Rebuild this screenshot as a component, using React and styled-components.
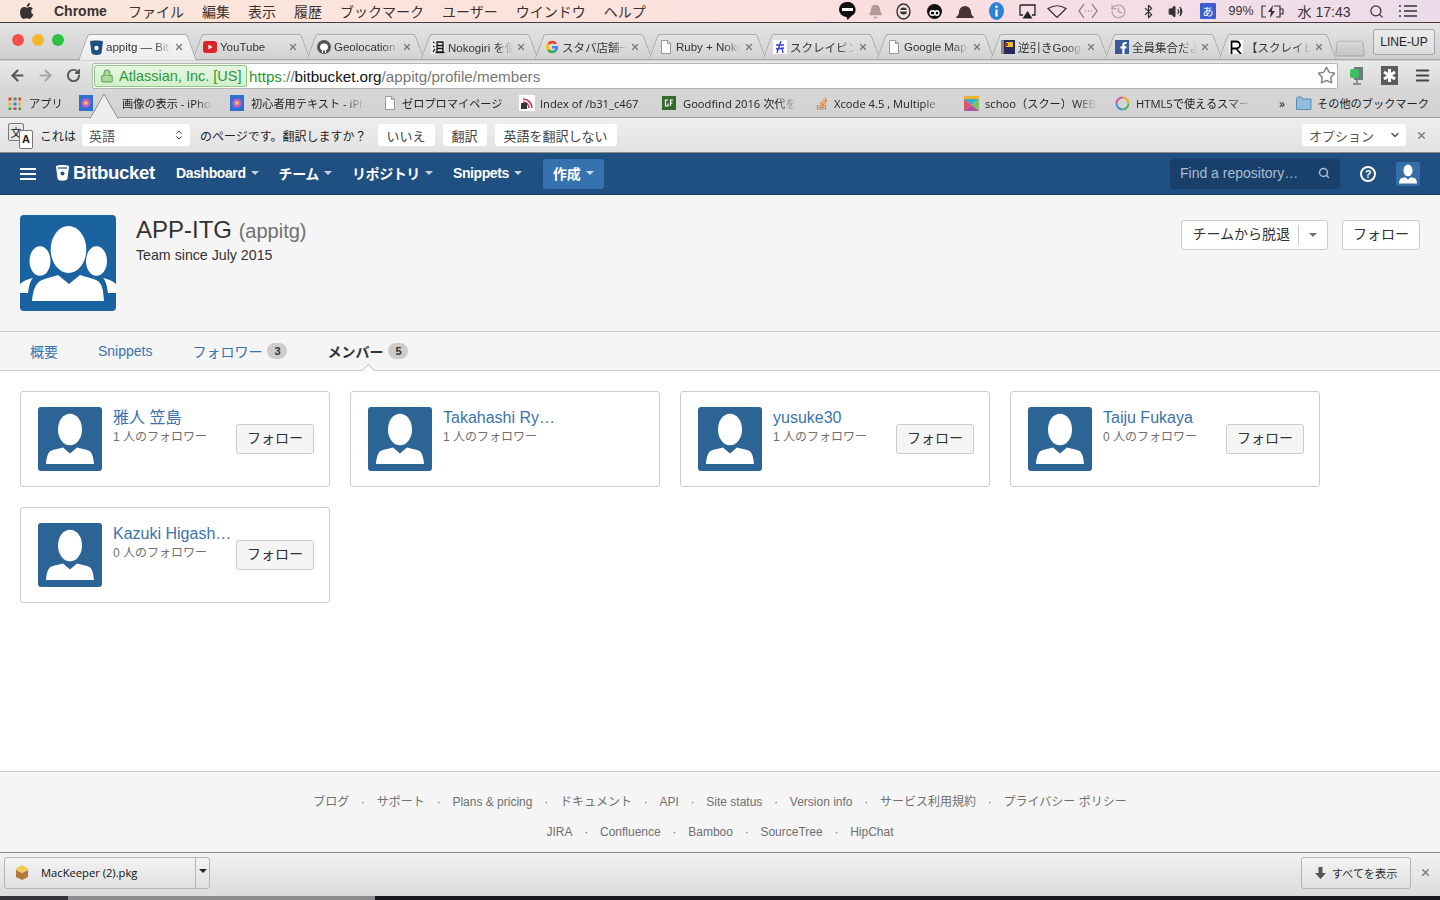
import styled, { createGlobalStyle } from 'styled-components';
import {
  ArrowLeft,
  ArrowRight,
  RotateCw,
  Star,
  Bell,
  Bluetooth,
  Volume2,
  Search,
  History,
  Lock,
  Menu,
  ChevronsUpDown,
  ChevronDown,
  X,
} from 'lucide-react';

const GlobalStyle = createGlobalStyle`
  html, body {
    margin: 0;
    padding: 0;
    background: #fff;
  }
  body {
    font-family: "Liberation Sans", "Noto Sans CJK JP", sans-serif;
    font-size: 14px;
    color: #333;
  }
  * {
    box-sizing: border-box;
  }
`;

const Screen = styled.div`
  width: 1440px;
  height: 900px;
  display: flex;
  flex-direction: column;
  overflow: hidden;
  position: relative;
`;

/* mac menu bar */
const MenuBar = styled.div`
  height: 23px;
  flex: none;
  display: flex;
  align-items: center;
  justify-content: space-between;
  padding: 0 20px;
  background: linear-gradient(90deg, #f9e6da 0%, #fce3dc 40%, #fbdfe0 60%, #ecdcea 100%);
  border-bottom: 1px solid #4a3a3a;
`;

const MenuLeft = styled.div`
  display: flex;
  align-items: center;
  gap: 18px;
  padding-bottom: 1px;
  color: #3a3232;
`;

const AppleIcon = styled.svg`
  width: 14px;
  height: 16px;
  margin-right: 2px;
`;

const AppName = styled.span`
  font-weight: 700;
  font-size: 14px;
  margin-right: 3px;
`;

const MenuItem = styled.span`
  font-size: 14px;
`;

const MenuRight = styled.div`
  display: flex;
  align-items: center;
  color: #3a3232;
  font-size: 13px;
  height: 22px;
`;

const StatusSlot = styled.div`
  width: ${({ $w }) => $w}px;
  display: flex;
  justify-content: center;
  align-items: center;
  white-space: nowrap;
  font-size: ${({ $size }) => $size || 13}px;
`;

const ImeBadge = styled.span`
  width: 16px;
  height: 16px;
  background: #3c5fd0;
  color: #fff;
  font-size: 11px;
  display: flex;
  align-items: center;
  justify-content: center;
  border-radius: 1px;
`;

/* chrome tab strip */
const Chrome = styled.div`
  flex: none;
  background: linear-gradient(#e4e4e4, #cfcfcf 38px, #e9e9e9 38px, #d6d6d6 68px, #d2d2d2 95px);
`;

const TabStrip = styled.div`
  height: 37px;
  display: flex;
  align-items: flex-end;
  padding-left: 12px;
  position: relative;
  border-bottom: 1px solid #a8a8a8;
`;

const TrafficLights = styled.div`
  display: flex;
  gap: 8px;
  width: 62px;
  height: 26px;
  padding-top: 1px;
  flex: none;
`;

const Light = styled.span`
  width: 12px;
  height: 12px;
  border-radius: 50%;
  background: ${({ $color }) => $color};
`;

const Tab = styled.div`
  width: 114px;
  height: 26px;
  flex: none;
  display: flex;
  align-items: center;
  padding: 0 4px 0 ${({ $active }) => ($active ? 16 : 15)}px;
  position: relative;
  font-size: 11.5px;
  color: #333;
  z-index: ${({ $active }) => ($active ? 2 : 1)};
  margin-bottom: -1px;

  &::before,
  &::after {
    content: '';
    position: absolute;
    top: 0;
    bottom: 0;
    width: 55%;
    z-index: -1;
    border-top: 1px solid #a9a9a9;
    background: ${({ $active }) =>
      $active ? 'linear-gradient(#f6f6f6, #ececec)' : 'linear-gradient(#e3e3e3, #d2d2d2)'};
    ${({ $active }) => ($active ? '' : 'border-bottom: 1px solid #a8a8a8;')}
  }
  &::before {
    left: 9px;
    border-left: 1px solid #a0a0a0;
    border-radius: 3px 0 0 0;
    transform: skewX(-20deg);
  }
  &::after {
    right: -4px;
    border-right: 1px solid #a0a0a0;
    border-radius: 0 3px 0 0;
    transform: skewX(20deg);
  }
`;

const TabTitle = styled.span`
  flex: 1;
  margin-left: 3px;
  white-space: nowrap;
  overflow: hidden;
  -webkit-mask-image: linear-gradient(90deg, #000 75%, transparent);
  mask-image: linear-gradient(90deg, #000 75%, transparent);
`;

const TabClose = styled(X)`
  width: 10px;
  height: 10px;
  flex: none;
  color: #777;
  margin-left: 3px;
  stroke-width: 3;
`;

const NewTab = styled.div`
  width: 28px;
  height: 16px;
  margin: 0 0 3px 8px;
  background: linear-gradient(#d8d8d8, #c6c6c6);
  border: 1px solid #a8a8a8;
  border-radius: 3px 3px 2px 2px;
  transform: perspective(20px) rotateX(10deg);
  flex: none;
`;

const ProfileButton = styled.div`
  position: absolute;
  right: 5px;
  top: 6px;
  width: 62px;
  height: 26px;
  border: 1px solid #a5a5a5;
  border-radius: 3px;
  background: linear-gradient(#ececec, #dcdcdc);
  font-size: 12px;
  color: #222;
  display: flex;
  align-items: center;
  justify-content: center;
`;

const Toolbar = styled.div`
  height: 31px;
  display: flex;
  align-items: center;
  padding: 0 0 0 3px;
`;

const NavIcon = styled.div`
  width: 28px;
  display: flex;
  justify-content: center;
  color: ${({ $dim }) => ($dim ? '#a8a8a8' : '#555')};
`;

const Omnibox = styled.div`
  width: 1246px;
  height: 26px;
  margin-left: 5px;
  background: #fff;
  border: 1px solid #b5b5b5;
  border-radius: 2px;
  display: flex;
  align-items: center;
  padding: 0 1px 0 1px;
  font-size: 14.5px;
`;

const EvBadge = styled.div`
  width: 153px;
  height: 22px;
  flex: none;
  display: flex;
  align-items: center;
  gap: 5px;
  padding: 1px 0 0 5px;
  background: linear-gradient(#e7f6e2, #d3efcb);
  border: 1px solid #8ccb82;
  border-radius: 2px;
  color: #2b9a3c;
  white-space: nowrap;
`;

const Url = styled.span`
  margin-left: 2px;
  padding-top: 1px;
  color: #777;
  flex: 1;
  font-size: 15.2px;
  white-space: nowrap;
  b {
    font-weight: 400;
    color: #1d9a2e;
  }
  em {
    font-style: normal;
    color: #111;
  }
`;

const ToolIcons = styled.div`
  flex: 1;
  display: flex;
  align-items: center;
  justify-content: flex-end;
  gap: 16px;
  padding-right: 9px;
  color: #555;
`;

const Bookmarks = styled.div`
  height: 27px;
  display: flex;
  align-items: center;
  padding: 0 0 2px 8px;
  font-family: "Open Sans", "Noto Sans CJK JP", sans-serif;
  font-size: 11.2px;
  color: #222;
  border-bottom: 1px solid #9e9e9e;
  position: relative;
`;

const Bookmark = styled.div`
  width: ${({ $w }) => $w}px;
  flex: none;
  display: flex;
  align-items: center;
  white-space: nowrap;
  gap: ${({ $gap }) => $gap ?? 5}px;
  overflow: hidden;
  padding-right: ${({ $pad }) => $pad ?? 18}px;
`;

const BookmarkText = styled.span`
  flex: 1;
  overflow: hidden;
  -webkit-mask-image: linear-gradient(90deg, #000 82%, transparent);
  mask-image: linear-gradient(90deg, #000 82%, transparent);
`;

const Overflow = styled.span`
  width: 17px;
  flex: none;
  font-size: 12px;
`;

/* translate bar */
const TranslateBar = styled.div`
  height: 35px;
  position: relative;
  display: flex;
  align-items: center;
  padding: 0 13px 0 8px;
  font-size: 12px;
  color: #222;
  background: linear-gradient(#eeeeee, #e2e2e2);
  border-bottom: 1px solid #8d8d8d;
`;

const Pointer = styled.svg`
  position: absolute;
  left: 90px;
  top: -25px;
  width: 30px;
  height: 26px;
`;

const TranslateIcon = styled.div`
  width: 27px;
  height: 27px;
  flex: none;
  position: relative;
  margin: 2px 5px 0 0;
`;

const Glyph = styled.span`
  position: absolute;
  left: ${({ $back }) => ($back ? 0 : 11)}px;
  top: ${({ $back }) => ($back ? 0 : 7)}px;
  width: ${({ $back }) => ($back ? 16 : 14)}px;
  height: ${({ $back }) => ($back ? 18 : 19)}px;
  border: 1px solid #777;
  border-radius: 2px;
  background: ${({ $back }) => ($back ? '#e8e8e8' : '#fff')};
  font-size: 11px;
  font-weight: ${({ $back }) => ($back ? 400 : 700)};
  display: flex;
  align-items: center;
  justify-content: center;
`;

const FakeSelect = styled.div`
  width: ${({ $w }) => $w}px;
  height: 22px;
  flex: none;
  background: #fff;
  border-radius: 3px;
  display: flex;
  align-items: center;
  justify-content: space-between;
  padding: 0 5px 0 7px;
  color: #555;
  font-size: 13px;
  margin: ${({ $m }) => $m || 0};
`;

const TranslateQuestion = styled.span`
  margin-right: 11px;
`;

const InfoButton = styled.div`
  height: 22px;
  flex: none;
  padding: 0 9px;
  margin-right: 8px;
  background: #fff;
  border-radius: 3px;
  display: flex;
  align-items: center;
  color: #444;
  font-size: 13px;
`;

const Spacer = styled.div`
  flex: 1;
`;

/* bitbucket header */
const Header = styled.header`
  height: 42px;
  flex: none;
  background: #205081;
  border-bottom: 1px solid #1a3f66;
  display: flex;
  align-items: center;
  padding: 0 20px;
  color: #fff;
`;

const Burger = styled.div`
  width: 16px;
  height: 12px;
  border-top: 2px solid #fff;
  border-bottom: 2px solid #fff;
  position: relative;
  margin-right: 20px;

  &::after {
    content: '';
    position: absolute;
    left: 0;
    right: 0;
    top: 3px;
    height: 2px;
    background: #fff;
  }
`;

const Logo = styled.div`
  display: flex;
  align-items: center;
  gap: 4px;
  margin-right: 21px;
  padding-bottom: 1px;
  font-weight: 700;
  font-size: 18.6px;
  letter-spacing: -0.3px;
`;

const HeadLink = styled.div`
  display: flex;
  align-items: center;
  gap: 5px;
  margin-right: 20px;
  padding-bottom: 2px;
  font-size: 14px;
  font-weight: 700;
  letter-spacing: -0.4px;
`;

const Caret = styled.span`
  width: 0;
  height: 0;
  border-left: 4px solid transparent;
  border-right: 4px solid transparent;
  border-top: 4px solid ${({ $color }) => $color || 'rgba(255,255,255,0.75)'};
`;

const CreateButton = styled.div`
  width: 61px;
  height: 30px;
  border-radius: 3px;
  background: #3572b0;
  display: flex;
  align-items: center;
  justify-content: center;
  gap: 5px;
  padding-bottom: 2px;
  font-weight: 700;
  margin-left: 1px;
`;

const SearchBox = styled.div`
  width: 170px;
  height: 30px;
  border-radius: 3px;
  background: #19406b;
  display: flex;
  align-items: center;
  justify-content: space-between;
  padding: 0 10px 1px;
  color: #a9bdd3;
`;

const UserBadge = styled.div`
  width: 24px;
  height: 24px;
  border-radius: 3px;
  background: #356ea6;
  overflow: hidden;
`;

const HelpIcon = styled.div`
  width: 16px;
  height: 16px;
  border: 2px solid #fff;
  border-radius: 50%;
  font-size: 11px;
  font-weight: 700;
  display: flex;
  align-items: center;
  justify-content: center;
  margin: 0 20px;
`;

/* profile */
const Profile = styled.section`
  height: 137px;
  flex: none;
  background: #f5f5f5;
  border-bottom: 1px solid #ccc;
  padding: 20px;
  display: flex;
`;

const ProfileInfo = styled.div`
  margin-left: 20px;
  flex: 1;
`;

const Title = styled.h1`
  margin: 0;
  font-weight: 400;
  font-size: 24px;
  line-height: 30px;
  color: #333;

  small {
    font-size: 20px;
    color: #707070;
  }
`;

const Since = styled.div`
  font-size: 14.2px;
  line-height: 20px;
  margin-top: -1px;
  color: #333;
`;

const ProfileActions = styled.div`
  display: flex;
  gap: 14px;
  margin-top: 5px;
  align-items: flex-start;
`;

const Button = styled.div`
  height: 30px;
  background: ${({ $grey }) => ($grey ? '#f5f5f5' : '#fff')};
  border: 1px solid #ccc;
  border-radius: 3px;
  padding: 0 10px 4px;
  display: flex;
  align-items: center;
  flex: none;
  color: #333;
`;

const SplitDivider = styled.span`
  width: 1px;
  height: 20px;
  background: #ccc;
  margin: 4px 10px 0 8px;
`;

const SplitCaret = styled(Caret)`
  margin-top: 4px;
`;

const TabsRow = styled.nav`
  height: 39px;
  flex: none;
  background: #f5f5f5;
  border-bottom: 1px solid #ccc;
  display: flex;
  align-items: center;
  padding: 0 0 1px 30px;
  gap: 40px;
  position: relative;
`;

const PageTab = styled.div`
  display: flex;
  align-items: center;
  gap: 5px;
  color: ${({ $active }) => ($active ? '#333' : '#3b73af')};
  font-weight: ${({ $active }) => ($active ? 700 : 400)};
`;

const Count = styled.span`
  width: 20px;
  height: 16px;
  border-radius: 8px;
  background: #ccc;
  color: #333;
  font-size: 11px;
  font-weight: 700;
  display: flex;
  align-items: center;
  justify-content: center;
  margin-top: 1px;
`;

const ActiveNotch = styled.span`
  position: absolute;
  left: 362px;
  bottom: -1px;
  width: 12px;
  height: 8px;
  overflow: hidden;

  &::after {
    content: '';
    position: absolute;
    left: 1px;
    top: 3px;
    width: 9px;
    height: 9px;
    background: #fff;
    border: 1px solid #ccc;
    transform: rotate(45deg);
  }
`;

const Main = styled.main`
  flex: 1;
  background: #fff;
  padding: 20px;
`;

const Grid = styled.div`
  display: grid;
  grid-template-columns: repeat(4, 310px);
  grid-auto-rows: 96px;
  gap: 20px;
`;

const Card = styled.div`
  border: 1px solid #ccc;
  border-radius: 3px;
  padding: 15px 15px 15px 17px;
  display: flex;
  align-items: center;
  background: #fff;
`;

const MemberText = styled.div`
  flex: 1;
  min-width: 0;
  margin: 0 4px 0 11px;
  align-self: flex-start;
  padding-top: 1px;
`;

const MemberName = styled.div`
  color: #3b73af;
  font-size: 16px;
  line-height: 20px;
  white-space: nowrap;
  overflow: hidden;
  text-overflow: ellipsis;
  max-width: ${({ $max }) => ($max ? `${$max}px` : 'none')};
`;

const Followers = styled.div`
  color: #707070;
  font-size: 12px;
  line-height: 16px;
  margin-top: 1px;
`;

const Footer = styled.footer`
  height: 81px;
  flex: none;
  background: #f5f5f5;
  border-top: 1px solid #ccc;
  padding-top: 20px;
  font-size: 12px;
  color: #707070;
`;

const FooterLine = styled.div`
  height: 30px;
  display: flex;
  justify-content: center;
  align-items: flex-start;
`;

const FooterLink = styled.span`
  display: flex;
  line-height: 20px;

  & + &::before {
    content: '·';
    width: 27.5px;
    text-align: center;
  }
`;

const DownloadBar = styled.div`
  height: 44px;
  flex: none;
  background: linear-gradient(#f1f1f1, #dcdcdc);
  border-top: 1px solid #8e8e8e;
  display: flex;
  align-items: center;
  padding: 0 9px 4px 4px;
  font-family: "Open Sans", "Noto Sans CJK JP", sans-serif;
  font-size: 11.2px;
  color: #111;
`;

const DownloadItem = styled.div`
  width: 206px;
  height: 32px;
  border: 1px solid #b5b5b5;
  border-radius: 3px;
  background: linear-gradient(#f3f3f3, #e0e0e0);
  display: flex;
  align-items: center;
  padding-left: 9px;
  gap: 11px;
`;

const DownloadName = styled.span`
  flex: 1;
`;

const DownloadMenu = styled.div`
  width: 14px;
  height: 100%;
  border-left: 1px solid #b5b5b5;
  display: flex;
  justify-content: center;
  padding-top: 11px;
`;

const ShowAll = styled.div`
  width: 110px;
  height: 32px;
  border: 1px solid #b5b5b5;
  border-radius: 3px;
  background: linear-gradient(#f3f3f3, #e0e0e0);
  display: flex;
  align-items: center;
  justify-content: center;
  gap: 6px;
  color: #333;
`;

const BarClose = styled(X)`
  width: 11px;
  height: 11px;
  color: #777;
  stroke-width: 3;
  margin-left: ${({ $m }) => $m || 9}px;
`;

const DesktopEdge = styled.div`
  height: 4px;
  flex: none;
  background: linear-gradient(90deg, #33333a 0 68px, #8d8d8f 68px 375px, #17171c 375px);
`;

const Apple = () => (
  <AppleIcon viewBox="0 0 14 16">
    <path
      fill="#3a3232"
      d="M10 0c.1 1-.3 2-.9 2.700-.6.7-1.500 1.200-2.400 1.100-.1-1 .4-2 .9-2.600C8.200.5 9.200 0 10 0zM13.400 11.500c-.4.900-.6 1.300-1.100 2-.7 1.100-1.700 2.400-2.900 2.400-1.100 0-1.400-.7-2.800-.7s-1.800.7-2.900.7c-1.200 0-2.100-1.200-2.800-2.200C-.100 10.900-.3 7.600.8 5.900c.8-1.200 2-1.900 3.200-1.900s2 .7 3 .7 1.600-.7 3-.7c1.100 0 2.200.6 3 1.600-2.600 1.400-2.200 5.100.4 5.900z"
    />
  </AppleIcon>
);

const Favicon = ({ kind }) => {
  switch (kind) {
    case 'bitbucket':
      return (
        <svg width="13" height="15" viewBox="0 0 13 15" style={{ flex: 'none' }}>
          <path fill="#205081" d="M0 1.500C0 0 13 0 13 1.500L11.500 13c-.2 2.500-9.800 2.500-10 0z" />
          <circle cx="6.500" cy="8" r="2.200" fill="#fff" />
        </svg>
      );
    case 'youtube':
      return (
        <svg width="14" height="14" viewBox="0 0 14 14" style={{ flex: 'none' }}>
          <rect y="1" width="14" height="12" rx="3" fill="#d9252a" />
          <path d="M5.500 4.500v5l4-2.500z" fill="#fff" />
        </svg>
      );
    case 'github':
      return (
        <svg width="14" height="14" viewBox="0 0 14 14" style={{ flex: 'none' }}>
          <circle cx="7" cy="7" r="7" fill="#555" />
          <ellipse cx="7" cy="7" rx="4" ry="3.600" fill="#fff" />
          <path d="M5 9h1v4H5zM8 9h1v4H8z" fill="#fff" />
        </svg>
      );
    case 'kanji':
      return (
        <svg width="14" height="14" viewBox="0 0 14 14" style={{ flex: 'none' }}>
          <rect width="14" height="14" fill="#eee" />
          <path d="M2 2l1.500 1M2 6l1.500 1M2 12l2-3M6 2h6v10H6zM6 5.500h6M6 8.500h6M4.500 12.500h9" stroke="#111" strokeWidth="1.300" fill="none" />
        </svg>
      );
    case 'google':
      return (
        <svg width="14" height="14" viewBox="0 0 14 14" style={{ flex: 'none' }}>
          <path d="M12 3A6 6 0 0 0 2.500 3L4.500 5A3.500 3.500 0 0 1 10 4.500z" fill="#ea4335" />
          <path d="M2.500 3a6 6 0 0 0 0 8l2-2a3.500 3.500 0 0 1 0-4z" fill="#fbbc05" />
          <path d="M2.500 11a6 6 0 0 0 9 .5l-2-1.800A3.500 3.500 0 0 1 4.500 9z" fill="#34a853" />
          <path d="M13 6H7v2.400h3.400a3 3 0 0 1-.9 1.300l2 1.800C12.700 10.300 13.400 8.300 13 6z" fill="#4285f4" />
        </svg>
      );
    case 'doc':
      return (
        <svg width="14" height="14" viewBox="-1 0 14 14" style={{ flex: 'none' }}>
          <path d="M1.500.500h6l3 3v10h-9z" fill="#fff" stroke="#999" />
          <path d="M7.500.500v3h3" fill="none" stroke="#999" />
        </svg>
      );
    case 'scrape':
      return (
        <svg width="14" height="14" viewBox="0 0 14 14" style={{ flex: 'none' }}>
          <rect width="14" height="14" fill="#fff" />
          <path d="M8 1L4 13M3 5h8M3 9l8-1M9 8l1 5" stroke="#3a3ae0" strokeWidth="1.300" fill="none" />
        </svg>
      );
    case 'gas':
      return (
        <svg width="14" height="14" viewBox="0 0 14 14" style={{ flex: 'none' }}>
          <rect width="14" height="14" fill="#2a2a5a" />
          <rect x="0" y="0" width="3" height="14" fill="#888" />
          <path d="M5 2h7v5H5z" fill="#f0c020" />
          <rect x="4" y="3" width="3" height="3" fill="#d22" />
        </svg>
      );
    case 'facebook':
      return (
        <svg width="14" height="14" viewBox="0 0 14 14" style={{ flex: 'none' }}>
          <rect width="14" height="14" fill="#3b5998" />
          <path d="M9.500 14V8.500h1.800l.3-2.200H9.500V5c0-.6.200-1 1-1h1.200V2.100C11.400 2 10.800 2 10.100 2 8.500 2 7.300 3 7.300 4.800v1.500H5.500v2.200h1.800V14z" fill="#fff" />
        </svg>
      );
    case 'r':
      return (
        <svg width="14" height="14" viewBox="0 0 14 14" style={{ flex: 'none' }}>
          <rect width="14" height="14" fill="#fff" />
          <path d="M2.500 14V1.500h5a3.500 3.500 0 0 1 0 7h-5M7 8.500l5 5.500" stroke="#000" strokeWidth="1.800" fill="none" />
        </svg>
      );
    case 'mosaic':
      return (
        <svg width="14" height="16" viewBox="0 0 14 16" style={{ flex: 'none' }}>
          <rect width="14" height="16" fill="#2f6fd0" />
          <circle cx="7" cy="8" r="4.500" fill="#c85ad0" />
          <circle cx="7" cy="8" r="2" fill="#e8c040" />
        </svg>
      );
    case 'podcast':
      return (
        <svg width="16" height="16" viewBox="0 0 16 16" style={{ flex: 'none' }}>
          <rect width="16" height="16" fill="#fff" />
          <path d="M4 4a9 9 0 0 1 9 9M4 7a6 6 0 0 1 6 6" stroke="#d8206a" strokeWidth="1.500" fill="none" />
          <rect x="2" y="8" width="6" height="6" fill="#333" />
        </svg>
      );
    case 'goodfind':
      return (
        <svg width="14" height="14" viewBox="0 0 14 14" style={{ flex: 'none' }}>
          <rect width="14" height="14" fill="#356a2c" />
          <path d="M6 4H3.500v6H6V7.500M11 4H8.500v6M8.500 7H10.500" stroke="#fff" strokeWidth="1.200" fill="none" />
        </svg>
      );
    case 'stack':
      return (
        <svg width="14" height="14" viewBox="0 0 14 14" style={{ flex: 'none' }}>
          <path d="M2.500 9v4h8V9" stroke="#999" strokeWidth="1.200" fill="none" />
          <path d="M4 11.500h5M4.200 9.500l5 .6M4.800 7.500l4.800 1.400M6 5.400l4.200 2.500M8 3.300l3.300 3.400M10 1.500l1.700 4.300" stroke="#f08020" strokeWidth="1.100" fill="none" />
        </svg>
      );
    case 'schoo':
      return (
        <svg width="15" height="15" viewBox="0 0 15 15" style={{ flex: 'none' }}>
          <rect width="15" height="3" fill="#f0b030" />
          <path d="M0 3h15L7.500 9z" fill="#38b0d0" />
          <path d="M0 15V3l7.500 6z" fill="#e05070" />
          <path d="M15 15V3L7.500 9z" fill="#80c060" />
          <path d="M0 15h15L7.500 9z" fill="#b050a0" />
        </svg>
      );
    case 'ring':
      return (
        <svg width="15" height="15" viewBox="0 0 15 15" style={{ flex: 'none' }}>
          <path d="M7.500 1.500a6 6 0 0 1 6 6" stroke="#e8b020" strokeWidth="2" fill="none" />
          <path d="M13.500 7.500a6 6 0 0 1-6 6" stroke="#50b060" strokeWidth="2" fill="none" />
          <path d="M7.500 13.500a6 6 0 0 1-6-6" stroke="#4090e0" strokeWidth="2" fill="none" />
          <path d="M1.500 7.500a6 6 0 0 1 6-6" stroke="#d05090" strokeWidth="2" fill="none" />
        </svg>
      );
    case 'apps':
      return (
        <svg width="13" height="13" viewBox="0 0 13 13" style={{ flex: 'none' }}>
          {[0, 1, 2].flatMap((r) =>
            [0, 1, 2].map((c) => (
              <rect
                key={`${r}-${c}`}
                x={c * 5 + 0.5}
                y={r * 5 + 0.5}
                width="3"
                height="3"
                fill={['#e04030', '#e8b020', '#40a050', '#3080e0'][(r + c * 2) % 4]}
              />
            )),
          )}
        </svg>
      );
    case 'folder':
      return (
        <svg width="16" height="15" viewBox="0 0 16 15" style={{ flex: 'none' }}>
          <path d="M.500 2.500C.500 1.500 1 1 2 1h3.500l1 2H15v10.500H.500z" fill="#8fbbdc" stroke="#5a8cb0" />
        </svg>
      );
    default:
      return null;
  }
};

// single person used for the member cards and the header badge
const PersonAvatar = ({ size = 64, bg = '#2d6496', radius = 3 }) => (
  <svg width={size} height={size} viewBox="0 0 64 64" style={{ flex: 'none', display: 'block' }}>
    <rect width="64" height="64" rx={radius} fill={bg} />
    <ellipse cx="32" cy="22.500" rx="12" ry="15.800" fill="#fff" />
    <path
      fill="#fff"
      d="M8 57c.6-7 2-11.500 4.500-13 4-2 9-2.500 12.500-3.500l7 6 7-6c3.500 1 8.500 1.500 12.500 3.500 2.500 1.500 3.900 6 4.500 13z"
    />
  </svg>
);

const TeamAvatar = () => (
  <svg width="96" height="96" viewBox="0 0 96 96" style={{ flex: 'none', display: 'block' }}>
    <rect width="96" height="96" rx="4" fill="#1a62a0" />
    <ellipse cx="48.500" cy="34.500" rx="17.800" ry="23.500" fill="#fff" />
    <ellipse cx="20" cy="46" rx="10.500" ry="14.800" fill="#fff" />
    <ellipse cx="76.500" cy="46" rx="10.500" ry="14.800" fill="#fff" />
    <path fill="#fff" d="M0 78v-9c3-3 8-5 13-6-3 3-4 8-5 15z" />
    <path fill="#fff" d="M96 78v-9c-3-3-8-5-13-6 3 3 4 8 5 15z" />
    <path
      fill="#fff"
      d="M12 86c1-10 3-18 10-21 6-2.500 11-3 16-5l11 9 11-9c5 2 10 2.500 16 5 7 3 7 11 8 21z"
    />
  </svg>
);

const menuItems = ['ファイル', '編集', '表示', '履歴', 'ブックマーク', 'ユーザー', 'ウインドウ', 'ヘルプ'];

const tabs = [
  { icon: 'bitbucket', title: 'appitg — Bitbucket', active: true },
  { icon: 'youtube', title: 'YouTube' },
  { icon: 'github', title: 'Geolocation API' },
  { icon: 'kanji', title: 'Nokogiri を使う' },
  { icon: 'google', title: 'スタバ店舗一覧' },
  { icon: 'doc', title: 'Ruby + Nokogiri' },
  { icon: 'scrape', title: 'スクレイピング' },
  { icon: 'doc', title: 'Google Maps' },
  { icon: 'gas', title: '逆引きGoogle' },
  { icon: 'facebook', title: '全員集合だよ' },
  { icon: 'r', title: '【スクレイピング' },
];

const bookmarks = [
  { icon: 'apps', title: 'アプリ', w: 71, gap: 8, pad: 0 },
  { icon: 'mosaic', title: '画像の表示 - iPhone', w: 151, gap: 29, pad: 17 },
  { icon: 'mosaic', title: '初心者用テキスト - iPhone', w: 153, gap: 7, pad: 18 },
  { icon: 'doc', title: 'ゼロプロマイページ', w: 136, gap: 5, pad: 0 },
  { icon: 'podcast', title: 'Index of /b31_c467', w: 143, gap: 5, pad: 0 },
  { icon: 'goodfind', title: 'Goodfind 2016 次代を担う', w: 153, gap: 7, pad: 18 },
  { icon: 'stack', title: 'Xcode 4.5 , Multiple', w: 149, gap: 5, pad: 21 },
  { icon: 'schoo', title: 'schoo（スクー）WEB', w: 151, gap: 6, pad: 18 },
  { icon: 'ring', title: 'HTML5で使えるスマートフォン', w: 164, gap: 6, pad: 29 },
];

const members = [
  { name: '雅人 笠島', followers: 1, canFollow: true },
  { name: 'Takahashi Ryosuke', followers: 1, maxName: 114 },
  { name: 'yusuke30', followers: 1, canFollow: true },
  { name: 'Taiju Fukaya', followers: 0, canFollow: true },
  { name: 'Kazuki Higashiguchi', followers: 0, canFollow: true },
];

const footerLines = [
  ['ブログ', 'サポート', 'Plans & pricing', 'ドキュメント', 'API', 'Site status', 'Version info', 'サービス利用規約', 'プライバシー ポリシー'],
  ['JIRA', 'Confluence', 'Bamboo', 'SourceTree', 'HipChat'],
];

const App = () => (
  <Screen>
    <GlobalStyle />

    <MenuBar>
      <MenuLeft>
        <Apple />
        <AppName>Chrome</AppName>
        {menuItems.map((item) => (
          <MenuItem key={item}>{item}</MenuItem>
        ))}
      </MenuLeft>
      <MenuRight>
        <StatusSlot $w={30}>
          <svg width="17" height="18" viewBox="0 0 17 18">
            <path d="M8.500 0a8 7.500 0 0 1 4 14L8.500 18l-1-3a8 7.500 0 0 1 1-15z" fill="#111" />
            <rect x="3" y="6" width="11" height="3" fill="#fff" />
          </svg>
        </StatusSlot>
        <StatusSlot $w={26}><Bell size={15} fill="#b09a9a" color="#b09a9a" /></StatusSlot>
        <StatusSlot $w={30}>
          <svg width="15" height="17" viewBox="0 0 15 17">
            <ellipse cx="7.500" cy="8.500" rx="6.500" ry="7.500" fill="none" stroke="#333" strokeWidth="1.400" />
            <circle cx="7.500" cy="8" r="3.500" fill="#333" />
            <rect x="4" y="7" width="7" height="1.500" fill="#fff" />
          </svg>
        </StatusSlot>
        <StatusSlot $w={32}>
          <svg width="19" height="15" viewBox="0 0 19 15">
            <circle cx="9.500" cy="7.500" r="7.500" fill="#111" />
            <path d="M5 9c0-3 5-3 5 0s4 3 4 0-4-3-4 0-5 3-5 0z" fill="none" stroke="#fff" strokeWidth="1.300" />
          </svg>
        </StatusSlot>
        <StatusSlot $w={30}>
          <svg width="20" height="16" viewBox="0 0 20 16">
            <path d="M1 15c0-2 3-2 3-6a6 6 0 0 1 12 0c0 4 3 4 3 6z" fill="#4a3535" />
          </svg>
        </StatusSlot>
        <StatusSlot $w={32}>
          <svg width="15" height="18" viewBox="0 0 15 18">
            <ellipse cx="7.500" cy="9" rx="7.500" ry="9" fill="#2b83d6" />
            <rect x="6.400" y="7.500" width="2.200" height="7" fill="#fff" />
            <circle cx="7.500" cy="4.800" r="1.300" fill="#fff" />
          </svg>
        </StatusSlot>
        <StatusSlot $w={30}>
          <svg width="17" height="15" viewBox="0 0 17 15">
            <path d="M1 1h15v10h-3M4 11H1V1" fill="none" stroke="#222" strokeWidth="1.300" />
            <path d="M8.500 7l5 7.500h-10z" fill="#222" />
          </svg>
        </StatusSlot>
        <StatusSlot $w={30}>
          <svg width="20" height="14" viewBox="0 0 20 14">
            <path d="M1 4.500Q10-1 19 4.500L10 13.500z" fill="none" stroke="#333" strokeWidth="1.200" />
          </svg>
        </StatusSlot>
        <StatusSlot $w={32}>
          <svg width="20" height="16" viewBox="0 0 20 16">
            <path d="M6 1L1 8l5 7M14 1l5 7-5 7" fill="none" stroke="#777" strokeWidth="1.200" />
            <path d="M7 8h1M10 8h1M13 8h1" stroke="#777" strokeWidth="1.200" />
          </svg>
        </StatusSlot>
        <StatusSlot $w={28}><History size={17} color="#b5a8a8" /></StatusSlot>
        <StatusSlot $w={32}><Bluetooth size={15} color="#333" /></StatusSlot>
        <StatusSlot $w={22}><Volume2 size={15} color="#333" fill="#333" /></StatusSlot>
        <StatusSlot $w={44}><ImeBadge>あ</ImeBadge></StatusSlot>
        <StatusSlot $w={22} $size={12.5}>99%</StatusSlot>
        <StatusSlot $w={40}>
          <svg width="23" height="13" viewBox="0 0 23 13">
            <path d="M5 1H1v11h4M13 1h6v11h-4M19 4h3v5h-3" fill="none" stroke="#333" strokeWidth="1.200" />
            <path d="M12 0L7 7h3l-1 6 5-7h-3z" fill="#333" />
          </svg>
        </StatusSlot>
        <StatusSlot $w={64} $size={14}>水 17:43</StatusSlot>
        <StatusSlot $w={40}><Search size={15} color="#333" /></StatusSlot>
        <StatusSlot $w={24}>
          <svg width="18" height="12" viewBox="0 0 18 12">
            <path d="M0 1h2M0 6h2M0 11h2M5 1h13M5 6h13M5 11h13" stroke="#333" strokeWidth="1.600" />
          </svg>
        </StatusSlot>
      </MenuRight>
    </MenuBar>

    <Chrome>
      <TabStrip>
        <TrafficLights>
          <Light $color="#f2524c" />
          <Light $color="#f5b62e" />
          <Light $color="#2ec23f" />
        </TrafficLights>
        {tabs.map((tab) => (
          <Tab key={tab.title} $active={tab.active}>
            <Favicon kind={tab.icon} />
            <TabTitle>{tab.title}</TabTitle>
            <TabClose />
          </Tab>
        ))}
        <NewTab />
        <ProfileButton>LINE-UP</ProfileButton>
      </TabStrip>

      <Toolbar>
        <NavIcon><ArrowLeft size={17} strokeWidth={3} /></NavIcon>
        <NavIcon $dim><ArrowRight size={17} strokeWidth={3} /></NavIcon>
        <NavIcon><RotateCw size={15} strokeWidth={3} /></NavIcon>
        <Omnibox>
          <EvBadge>
            <Lock size={14} color="#6aa860" fill="#a8d89c" />
            Atlassian, Inc. [US]
          </EvBadge>
          <Url>
            <b>https</b>://<em>bitbucket.org</em>/appitg/profile/members
          </Url>
          <Star size={19} color="#888" />
        </Omnibox>
        <ToolIcons>
          <svg width="17" height="19" viewBox="0 0 17 19">
            <rect x="6" y="1" width="9" height="13" fill="#6a7a80" />
            <rect x="2" y="3" width="9" height="9" rx="2" fill="#3fc060" />
            <path d="M9 14v3M5 18h8" stroke="#777" strokeWidth="1.500" />
          </svg>
          <svg width="17" height="19" viewBox="0 0 17 19">
            <rect width="17" height="19" y="0" fill="#5c5c5c" />
            <path d="M8.500 3v13M3 6l11 7M14 6L3 13" stroke="#fff" strokeWidth="3" />
          </svg>
          <Menu size={17} strokeWidth={3} color="#444" />
        </ToolIcons>
      </Toolbar>

      <Bookmarks>
        {bookmarks.map((item) => (
          <Bookmark key={item.title} $w={item.w} $gap={item.gap} $pad={item.pad}>
            <Favicon kind={item.icon} />
            <BookmarkText>{item.title}</BookmarkText>
          </Bookmark>
        ))}
        <Overflow>»</Overflow>
        <Bookmark $w={140} $gap={5} $pad={0}>
          <Favicon kind="folder" />
          その他のブックマーク
        </Bookmark>
      </Bookmarks>
    </Chrome>

    <TranslateBar>
      <Pointer viewBox="0 0 30 26">
        <path d="M0 26L14 1l14 25z" fill="#eeeeee" />
        <path d="M0 25.500L14 1l14 24.500" fill="none" stroke="#8d8d8d" />
      </Pointer>
      <TranslateIcon>
        <Glyph $back>文</Glyph>
        <Glyph>A</Glyph>
      </TranslateIcon>
      これは
      <FakeSelect $w={108} $m="0 10px 0 6px">
        英語
        <ChevronsUpDown size={12} />
      </FakeSelect>
      <TranslateQuestion>のページです。翻訳しますか？</TranslateQuestion>
      <InfoButton>いいえ</InfoButton>
      <InfoButton>翻訳</InfoButton>
      <InfoButton>英語を翻訳しない</InfoButton>
      <Spacer />
      <FakeSelect $w={104}>
        オプション
        <ChevronDown size={12} strokeWidth={3} />
      </FakeSelect>
      <BarClose $m={10} />
    </TranslateBar>

    <Header>
      <Burger />
      <Logo>
        <svg width="13" height="16" viewBox="0 0 13 16">
          <path
            fill="#fff"
            d="M0 1.500C0-.5 13-.5 13 1.500L11.500 13.500c-.3 3-9.700 3-10 0z"
          />
          <path d="M2 3h9" stroke="#205081" strokeWidth="1.200" />
          <circle cx="6.500" cy="8.500" r="2" fill="#205081" />
        </svg>
        Bitbucket
      </Logo>
      <HeadLink>Dashboard <Caret /></HeadLink>
      <HeadLink>チーム <Caret /></HeadLink>
      <HeadLink>リポジトリ <Caret /></HeadLink>
      <HeadLink>Snippets <Caret /></HeadLink>
      <CreateButton>作成 <Caret /></CreateButton>
      <Spacer />
      <SearchBox>
        Find a repository…
        <Search size={12} strokeWidth={3} />
      </SearchBox>
      <HelpIcon>?</HelpIcon>
      <UserBadge>
        <PersonAvatar size={24} bg="#356ea6" radius={0} />
      </UserBadge>
    </Header>

    <Profile>
      <TeamAvatar />
      <ProfileInfo>
        <Title>
          APP-ITG <small>(appitg)</small>
        </Title>
        <Since>Team since July 2015</Since>
      </ProfileInfo>
      <ProfileActions>
        <Button>
          チームから脱退
          <SplitDivider />
          <SplitCaret $color="#707070" />
        </Button>
        <Button>フォロー</Button>
      </ProfileActions>
    </Profile>

    <TabsRow>
      <PageTab>概要</PageTab>
      <PageTab>Snippets</PageTab>
      <PageTab>
        フォロワー <Count>3</Count>
      </PageTab>
      <PageTab $active>
        メンバー <Count>5</Count>
      </PageTab>
      <ActiveNotch />
    </TabsRow>

    <Main>
      <Grid>
        {members.map((member) => (
          <Card key={member.name}>
            <PersonAvatar />
            <MemberText>
              <MemberName $max={member.maxName}>{member.name}</MemberName>
              <Followers>{member.followers} 人のフォロワー</Followers>
            </MemberText>
            {member.canFollow && <Button $grey>フォロー</Button>}
          </Card>
        ))}
      </Grid>
    </Main>

    <Footer>
      {footerLines.map((line) => (
        <FooterLine key={line[0]}>
          {line.map((link) => (
            <FooterLink key={link}>{link}</FooterLink>
          ))}
        </FooterLine>
      ))}
    </Footer>

    <DownloadBar>
      <DownloadItem>
        <svg width="16" height="15" viewBox="0 0 16 15" style={{ flex: 'none' }}>
          <path d="M2 5l6 3 6-3v7l-6 3-6-3z" fill="#b5773a" />
          <path d="M1 4l7-4 7 4-7 3.500z" fill="#f0cc50" />
        </svg>
        <DownloadName>MacKeeper (2).pkg</DownloadName>
        <DownloadMenu>
          <Caret $color="#222" />
        </DownloadMenu>
      </DownloadItem>
      <Spacer />
      <ShowAll>
        <svg width="11" height="12" viewBox="0 0 11 12">
          <path d="M3.500 0h4v6H11l-5.500 6L0 6h3.500z" fill="#555" />
        </svg>
        すべてを表示
      </ShowAll>
      <BarClose />
    </DownloadBar>
    <DesktopEdge />
  </Screen>
);

export default App;
